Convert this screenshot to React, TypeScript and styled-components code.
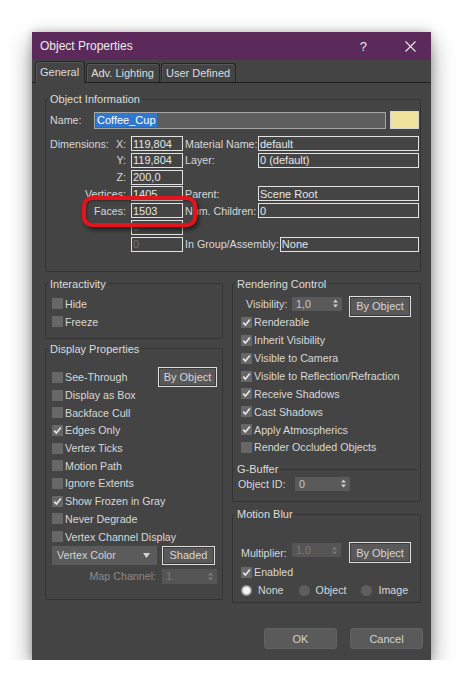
import React from "react";
import styled, { createGlobalStyle } from "styled-components";

const GlobalStyle = createGlobalStyle`
  html, body {
    margin: 0;
    background: #ffffff;
  }
  body {
    font-family: "Liberation Sans", Arial, sans-serif;
    font-size: 10.7px;
    color: #d8d8d8;
  }
  * {
    box-sizing: border-box;
  }
`;

const Page = styled.div`
  padding: 32px 0 0 32px;
`;

const Dialog = styled.div`
  width: 399px;
  height: 628px;
  display: flex;
  flex-direction: column;
  background: #444444;
  box-shadow: 0 10px 22px rgba(0, 0, 0, 0.42), 0 0 8px rgba(0, 0, 0, 0.22);
`;

const TitleBar = styled.div`
  flex: none;
  height: 28px;
  display: flex;
  align-items: center;
  padding: 0 15px 0 8px;
  background: #5b2a5b;
  color: #ececec;
  font-size: 12px;
`;

const Title = styled.div`
  flex: 1;
`;

const HelpGlyph = styled.span`
  font-size: 13px;
  margin-right: 38px;
`;

const TabStrip = styled.div`
  flex: none;
  height: 23px;
  display: flex;
  align-items: flex-end;
  padding-left: 3px;
  border-bottom: 1px solid #1f1f1f;
`;

const Tab = styled.div<{ $active?: boolean }>`
  height: ${(p) => (p.$active ? 22 : 19)}px;
  margin-bottom: ${(p) => (p.$active ? -1 : 0)}px;
  margin-right: 1px;
  padding: ${(p) => (p.$active ? "0 5px 1px 4px" : "0 5px 0 4px")};
  display: flex;
  align-items: center;
  background: #444444;
  border: 1px solid #262626;
  border-bottom: none;
  border-radius: 3px 3px 0 0;
  box-shadow: inset 1px 1px 0 #575757;
  color: #dedede;
  font-size: 11px;
`;

const Panel = styled.div`
  flex: 1;
  display: flex;
  flex-direction: column;
  gap: 5px;
  padding: 9px 10px 0 13px;
`;

const Group = styled.fieldset`
  margin: 0;
  padding: 0;
  min-width: 0;
  border: 1px solid #333333;
  border-radius: 2px;
`;

const SubGroup = styled.fieldset`
  margin: 6px -7px 0 -8px;
  padding: 0;
  min-width: 0;
  border: none;
  border-top: 1px solid #333333;
`;

const Legend = styled.legend`
  margin-left: 2px;
  padding: 0 2px;
  line-height: 14px;
  font-size: 11px;
  color: #dcdcdc;
`;

const Body = styled.div<{ $pad: string }>`
  display: flex;
  flex-direction: column;
  padding: ${(p) => p.$pad};
`;

const NameRow = styled.div`
  display: flex;
  align-items: center;
  height: 18px;
  margin: 5px 1px 0 4px;
`;

const NameLabel = styled.span`
  width: 44px;
`;

const NameField = styled.div`
  flex: 1;
  height: 17px;
  display: flex;
  align-items: center;
  padding-left: 1px;
  background: #5e5e5e;
  border: 1px solid #a6a6a6;
`;

const Selected = styled.span`
  padding: 0 1px;
  line-height: 14px;
  background: #3078cf;
  color: #ffffff;
  font-size: 11px;
`;

const Swatch = styled.div`
  width: 29px;
  height: 18px;
  margin-left: 4px;
  background: #efe09b;
  border: 1px solid #d6d6d6;
`;

const InfoGrid = styled.div`
  position: relative;
  display: grid;
  grid-template-columns: 81px 52px 75px 1fr;
  grid-auto-rows: 15px;
  row-gap: 1.75px;
  margin: 7px 0 0 0;
  padding: 0 1px 19px 4px;
`;

const CellLabel = styled.div<{ $justify: string }>`
  display: flex;
  align-items: center;
  justify-content: ${(p) => p.$justify};
  padding: ${(p) => (p.$justify === "flex-start" ? "0 0 0 2px" : "0 5px 0 0")};
  white-space: nowrap;
`;

const Field = styled.div<{ $dim?: boolean }>`
  display: flex;
  align-items: center;
  padding-left: 1px;
  border: 1px solid #e2e2e2;
  color: ${(p) => (p.$dim ? "#727272" : "#e4e4e4")};
  font-size: 11px;
  white-space: nowrap;
  overflow: hidden;
`;

const Span2 = styled.div`
  grid-column: 3 / 5;
  display: flex;
  align-items: stretch;
`;

const WideLabel = styled.span`
  display: flex;
  align-items: center;
  padding: 0 1px 0 2px;
  white-space: nowrap;
`;

const Annotation = styled.div`
  position: absolute;
  left: 36px;
  top: 60px;
  width: 115px;
  height: 31px;
  border: 4px solid #e3141b;
  border-radius: 10px;
  box-shadow: 2px 3px 4px rgba(0, 0, 0, 0.55), inset 1px 1px 2px rgba(0, 0, 0, 0.35);
  pointer-events: none;
`;

const Columns = styled.div`
  display: grid;
  grid-template-columns: 178px 1fr;
  column-gap: 9px;
  align-items: start;
`;

const Stack = styled.div<{ $gap: number }>`
  display: flex;
  flex-direction: column;
  gap: ${(p) => p.$gap}px;
`;

const CheckRow = styled.div<{ $h: number }>`
  display: flex;
  align-items: center;
  height: ${(p) => p.$h}px;
  white-space: nowrap;
`;

const Box = styled.span`
  flex: none;
  width: 11px;
  height: 11px;
  margin-right: 2px;
  display: flex;
  align-items: center;
  justify-content: center;
  background: #676767;
`;

const Button = styled.div<{ $w: number; $h: number }>`
  flex: none;
  width: ${(p) => p.$w}px;
  height: ${(p) => p.$h}px;
  display: flex;
  align-items: center;
  justify-content: center;
  background: #595959;
  border: 1px solid #dedede;
  box-shadow: inset 0 0 0 1px #3c3c3c;
  color: #d6d6d6;
  font-size: 11px;
`;

const PushRight = styled.div`
  margin-left: auto;
`;

const DropRow = styled.div`
  display: flex;
  align-items: center;
  height: 20px;
`;

const Dropdown = styled.div`
  width: 105px;
  height: 19px;
  display: flex;
  align-items: center;
  justify-content: space-between;
  padding: 0 7px 0 5px;
  margin-right: 5px;
  background: #5b5b5b;
  color: #d4d4d4;
`;

const MapRow = styled.div`
  display: flex;
  align-items: center;
  height: 16px;
  margin-top: 3px;
`;

const MutedLabel = styled.span<{ $w: number }>`
  width: ${(p) => p.$w}px;
  padding-right: 6px;
  text-align: right;
  color: #8a8a8a;
`;

const Spinner = styled.div<{ $w: number; $h: number; $dim?: boolean }>`
  flex: none;
  width: ${(p) => p.$w}px;
  height: ${(p) => p.$h}px;
  display: flex;
  align-items: center;
  justify-content: space-between;
  padding: 0 4px 0 4px;
  background: ${(p) => (p.$dim ? "#555555" : "#5a5a5a")};
  color: ${(p) => (p.$dim ? "#7b7b7b" : "#c8c8c8")};
`;

const SpinRow = styled.div<{ $h: number; $top?: boolean }>`
  display: flex;
  align-items: ${(p) => (p.$top ? "flex-start" : "center")};
  height: ${(p) => p.$h}px;
`;

const RowLabel = styled.span<{ $w: number; $indent: number }>`
  width: ${(p) => p.$w}px;
  margin-left: ${(p) => p.$indent}px;
  white-space: nowrap;
`;

const RadioRow = styled.div`
  display: flex;
  align-items: center;
  height: 18px;
  gap: 15px;
`;

const RadioItem = styled.label`
  display: flex;
  align-items: center;
  gap: 6px;
`;

const RadioDot = styled.span<{ $on?: boolean }>`
  width: 11px;
  height: 11px;
  border-radius: 50%;
  background: ${(p) =>
    p.$on
      ? "radial-gradient(circle, #f4f4f4 0 3px, #bdbdbd 4px, #7a7a7a 5.5px)"
      : "#5e5e5e"};
`;

const Footer = styled.div`
  flex: none;
  display: flex;
  justify-content: flex-end;
  gap: 13px;
  padding: 0 8px 11px 0;
`;

const DialogButton = styled.div`
  width: 73px;
  height: 21px;
  display: flex;
  align-items: center;
  justify-content: center;
  background: #5a5a5a;
  border: 1px solid #626262;
  border-radius: 3px;
  color: #d2d2d2;
  font-size: 11px;
`;

const CheckMark = () => (
  <svg width="9" height="9" viewBox="0 0 9 9">
    <path d="M1.2 4.6 L3.4 7 L7.9 1.6" fill="none" stroke="#e8e8e8" strokeWidth="1.6" />
  </svg>
);

const Arrows = ({ dim }: { dim?: boolean }) => (
  <svg width="5" height="9" viewBox="0 0 5 9">
    <path d="M0 3.5 L2.5 0.5 L5 3.5 Z M0 5.5 L2.5 8.5 L5 5.5 Z" fill={dim ? "#7a7a7a" : "#d0d0d0"} />
  </svg>
);

const CloseIcon = () => (
  <svg width="11" height="11" viewBox="0 0 11 11">
    <path d="M0.5 0.5 L10.5 10.5 M10.5 0.5 L0.5 10.5" stroke="#ededed" strokeWidth="1.1" />
  </svg>
);

const Check = ({ label, on, h = 18 }: { label: string; on?: boolean; h?: number }) => (
  <CheckRow $h={h}>
    <Box>{on && <CheckMark />}</Box>
    {label}
  </CheckRow>
);

const displayRows: [string, boolean][] = [
  ["Display as Box", false],
  ["Backface Cull", false],
  ["Edges Only", true],
  ["Vertex Ticks", false],
  ["Motion Path", false],
  ["Ignore Extents", false],
  ["Show Frozen in Gray", true],
  ["Never Degrade", false],
  ["Vertex Channel Display", false],
];

const renderRows: [string, boolean][] = [
  ["Renderable", true],
  ["Inherit Visibility", true],
  ["Visible to Camera", true],
  ["Visible to Reflection/Refraction", true],
  ["Receive Shadows", true],
  ["Cast Shadows", true],
  ["Apply Atmospherics", true],
  ["Render Occluded Objects", false],
];

export default function App() {
  return (
    <Page>
      <GlobalStyle />
      <Dialog>
        <TitleBar>
          <Title>Object Properties</Title>
          <HelpGlyph>?</HelpGlyph>
          <CloseIcon />
        </TitleBar>

        <TabStrip>
          <Tab $active>General</Tab>
          <Tab>Adv. Lighting</Tab>
          <Tab>User Defined</Tab>
        </TabStrip>

        <Panel>
          <Group>
            <Legend>Object Information</Legend>
            <NameRow>
              <NameLabel>Name:</NameLabel>
              <NameField>
                <Selected>Coffee_Cup</Selected>
              </NameField>
              <Swatch />
            </NameRow>
            <InfoGrid>
              <CellLabel $justify="space-between">
                <span>Dimensions:</span>
                <span>X:</span>
              </CellLabel>
              <Field>119,804</Field>
              <CellLabel $justify="flex-start">Material Name:</CellLabel>
              <Field>default</Field>

              <CellLabel $justify="flex-end">Y:</CellLabel>
              <Field>119,804</Field>
              <CellLabel $justify="flex-start">Layer:</CellLabel>
              <Field>0 (default)</Field>

              <CellLabel $justify="flex-end">Z:</CellLabel>
              <Field>200,0</Field>
              <span />
              <span />

              <CellLabel $justify="flex-end">Vertices:</CellLabel>
              <Field>1405</Field>
              <CellLabel $justify="flex-start">Parent:</CellLabel>
              <Field>Scene Root</Field>

              <CellLabel $justify="flex-end">Faces:</CellLabel>
              <Field>1503</Field>
              <CellLabel $justify="flex-start">Num. Children:</CellLabel>
              <Field>0</Field>

              <span />
              <Field $dim>0</Field>
              <span />
              <span />

              <span />
              <Field $dim>0</Field>
              <Span2>
                <WideLabel>In Group/Assembly:</WideLabel>
                <Field style={{ flex: 1 }}>None</Field>
              </Span2>

              <Annotation />
            </InfoGrid>
          </Group>

          <Columns>
            <Stack $gap={3}>
              <Group>
                <Legend>Interactivity</Legend>
                <Body $pad="4px 0 7px 6px">
                  <Check label="Hide" />
                  <Check label="Freeze" />
                </Body>
              </Group>

              <Group>
                <Legend>Display Properties</Legend>
                <Body $pad="13px 5px 15px 6px">
                  <CheckRow $h={17.7}>
                    <Box />
                    See-Through
                    <PushRight>
                      <Button $w={59} $h={20}>By Object</Button>
                    </PushRight>
                  </CheckRow>
                  {displayRows.map(([label, on]) => (
                    <Check key={label} label={label} on={on} h={17.7} />
                  ))}
                  <DropRow>
                    <Dropdown>
                      <span>Vertex Color</span>
                      <svg width="7" height="5" viewBox="0 0 7 5">
                        <path d="M0 0 L7 0 L3.5 5 Z" fill="#d6d6d6" />
                      </svg>
                    </Dropdown>
                    <Button $w={53} $h={19}>Shaded</Button>
                  </DropRow>
                  <MapRow>
                    <MutedLabel $w={111}>Map Channel:</MutedLabel>
                    <Spinner $w={55} $h={15} $dim>
                      <span>1</span>
                      <Arrows dim />
                    </Spinner>
                  </MapRow>
                </Body>
              </Group>
            </Stack>

            <Stack $gap={5}>
              <Group>
                <Legend>Rendering Control</Legend>
                <Body $pad="5px 9px 10px 8px">
                  <SpinRow $h={18} $top>
                    <RowLabel $w={46} $indent={5} style={{ lineHeight: "16px" }}>Visibility:</RowLabel>
                    <Spinner $w={50} $h={14} style={{ marginTop: 1 }}>
                      <span>1,0</span>
                      <Arrows />
                    </Spinner>
                    <PushRight>
                      <Button $w={62} $h={21}>By Object</Button>
                    </PushRight>
                  </SpinRow>
                  {renderRows.map(([label, on]) => (
                    <Check key={label} label={label} on={on} h={17.86} />
                  ))}
                  <SubGroup>
                    <Legend>G-Buffer</Legend>
                    <SpinRow $h={15}>
                      <RowLabel $w={57} $indent={5}>Object ID:</RowLabel>
                      <Spinner $w={55} $h={14}>
                        <span>0</span>
                        <Arrows />
                      </Spinner>
                    </SpinRow>
                  </SubGroup>
                </Body>
              </Group>

              <Group>
                <Legend>Motion Blur</Legend>
                <Body $pad="21px 9px 3px 8px">
                  <SpinRow $h={21}>
                    <RowLabel $w={51} $indent={0}>Multiplier:</RowLabel>
                    <Spinner $w={49} $h={14} $dim style={{ alignSelf: "flex-start", marginTop: 1 }}>
                      <span>1,0</span>
                      <Arrows dim />
                    </Spinner>
                    <PushRight>
                      <Button $w={62} $h={21}>By Object</Button>
                    </PushRight>
                  </SpinRow>
                  <Check label="Enabled" on />
                  <RadioRow>
                    <RadioItem>
                      <RadioDot $on />
                      None
                    </RadioItem>
                    <RadioItem>
                      <RadioDot />
                      Object
                    </RadioItem>
                    <RadioItem>
                      <RadioDot />
                      Image
                    </RadioItem>
                  </RadioRow>
                </Body>
              </Group>
            </Stack>
          </Columns>
        </Panel>

        <Footer>
          <DialogButton>OK</DialogButton>
          <DialogButton>Cancel</DialogButton>
        </Footer>
      </Dialog>
    </Page>
  );
}
